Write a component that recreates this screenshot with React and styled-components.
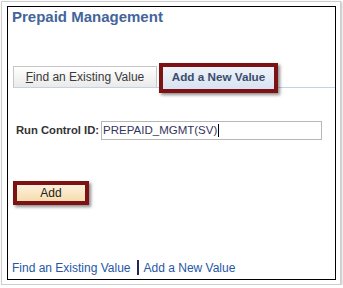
import React from "react";
import styled, { createGlobalStyle } from "styled-components";

const Global = createGlobalStyle`
  html, body { margin: 0; padding: 0; background: #fff; }
  body { font-family: "Liberation Sans", Arial, sans-serif; }
  * { box-sizing: border-box; }
`;

const Frame = styled.div`
  margin: 1px 0 0 1px;
  width: 340px;
  height: 284px;
  border: 1px solid #cdcdcd;
  box-shadow: 1px 1px 2px rgba(0, 0, 0, 0.25);
  padding: 4px 4px 4px 5px;
  background: #fff;
`;

const Panel = styled.div`
  width: 329px;
  height: 274px;
  border: 1px solid #000;
  display: flex;
  flex-direction: column;
  padding: 1px 0 4px 0;
`;

const Title = styled.h1`
  margin: 0 0 0 4px;
  font-size: 15px;
  line-height: 18px;
  font-weight: bold;
  color: #44659a;
`;

const TabRow = styled.div`
  display: flex;
  align-items: flex-start;
  gap: 5px;
  margin: 40px 0 0 5px;
  height: 22px;
  border-bottom: 1px solid #c6d2e4;
`;

const Tab = styled.div`
  position: relative;
  width: ${(p) => p.$w}px;
  height: ${(p) => (p.$active ? 23 : 21)}px;
  border: 1px solid ${(p) => (p.$active ? "#b9c8de" : "#c6c6c6")};
  border-bottom: 0;
  background: ${(p) =>
    p.$active
      ? "linear-gradient(#eef3fa, #d8e2f0)"
      : "linear-gradient(#ffffff, #eaeaea)"};
  font-size: ${(p) => (p.$active ? "11.7px" : "12px")};
  line-height: 20px;
  text-align: center;
  font-weight: ${(p) => (p.$active ? "bold" : "normal")};
  color: ${(p) => (p.$active ? "#3b4d6d" : "#3a3a3a")};
  white-space: nowrap;
  ${(p) =>
    p.$highlight &&
    `
    &::after {
      content: "";
      position: absolute;
      top: -4px; left: -4px; right: -4px; bottom: -4px;
      border: 4px solid #7d1214;
      box-shadow: 2px 2px 3px rgba(0,0,0,0.45);
      pointer-events: none;
    }
  `}
`;

const Key = styled.span`
  text-decoration: underline;
`;

const FieldRow = styled.div`
  display: flex;
  align-items: center;
  gap: 2px;
  margin: 33px 0 0 8px;
`;

const Label = styled.span`
  font-size: 11.25px;
  font-weight: bold;
  color: #333;
  line-height: 19px;
`;

const Field = styled.div`
  width: 221px;
  height: 19px;
  border: 1px solid #b7b7b7;
  padding: 0 0 0 1px;
  font-size: 11.5px;
  line-height: 17px;
  color: #34345e;
  display: flex;
  align-items: center;
`;

const Caret = styled.span`
  display: inline-block;
  width: 1px;
  height: 13px;
  background: #000;
  margin-left: 1px;
`;

const Button = styled.button`
  position: relative;
  margin: 44px 0 0 8px;
  width: 70px;
  height: 18px;
  border: 1px solid #d9b98a;
  background: linear-gradient(#fdf1dc, #f7dcae);
  font-family: inherit;
  font-size: 12px;
  line-height: 16px;
  color: #222;
  padding: 0;
  ${(p) =>
    p.$highlight &&
    `
    &::after {
      content: "";
      position: absolute;
      top: -4px; left: -4px; right: -4px; bottom: -4px;
      border: 4px solid #7d1214;
      box-shadow: 2px 2px 3px rgba(0,0,0,0.45);
      pointer-events: none;
    }
  `}
`;

const Links = styled.div`
  margin: auto 0 0 4px;
  display: flex;
  align-items: center;
  font-size: 12px;
  line-height: 14px;
`;

const Link = styled.a`
  color: #2657a6;
  text-decoration: none;
`;

const Sep = styled.span`
  display: inline-block;
  width: 2px;
  height: 15px;
  background: #25245c;
  margin: 0 5px 0 6px;
`;

export default function App() {
  return (
    <>
      <Global />
      <Frame>
        <Panel>
          <Title>Prepaid Management</Title>
          <TabRow>
            <Tab $w={144}>
              <Key>F</Key>ind an Existing Value
            </Tab>
            <Tab $w={113} $active $highlight>
              Add a New Value
            </Tab>
          </TabRow>
          <FieldRow>
            <Label>Run Control ID:</Label>
            <Field>
              PREPAID_MGMT(SV)
              <Caret />
            </Field>
          </FieldRow>
          <div>
            <Button $highlight>Add</Button>
          </div>
          <Links>
            <Link>Find an Existing Value</Link>
            <Sep />
            <Link>Add a New Value</Link>
          </Links>
        </Panel>
      </Frame>
    </>
  );
}
